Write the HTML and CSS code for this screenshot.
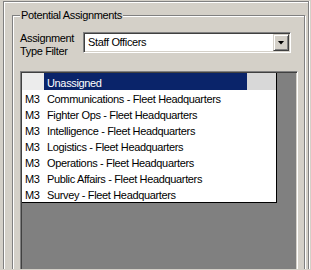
FILE: index.html
```html
<!DOCTYPE html>
<html lang="en">
<head>
  <meta charset="UTF-8">
  <title>Potential Assignments</title>
  <link rel="stylesheet" href="styles.css">
</head>
<body>
  <div class="frame">
    <fieldset class="group">
      <legend>Potential Assignments</legend>
      <div class="filter-row">
        <div class="filter-label">Assignment<br>Type Filter</div>
        <div class="combo">
          <span class="combo-text">Staff Officers</span>
          <span class="combo-btn"><span class="arrow"></span></span>
        </div>
      </div>
      <div class="workspace">
        <div class="grid">
          <div class="row first selected">
            <span class="cell rank"></span>
            <span class="cell name">Unassigned</span>
            <span class="cell fill"></span>
          </div>
          <div class="row"><span class="cell rank">M3</span><span class="cell name">Communications - Fleet Headquarters</span><span class="cell fill"></span></div>
          <div class="row"><span class="cell rank">M3</span><span class="cell name">Fighter Ops - Fleet Headquarters</span><span class="cell fill"></span></div>
          <div class="row"><span class="cell rank">M3</span><span class="cell name">Intelligence - Fleet Headquarters</span><span class="cell fill"></span></div>
          <div class="row"><span class="cell rank">M3</span><span class="cell name">Logistics - Fleet Headquarters</span><span class="cell fill"></span></div>
          <div class="row"><span class="cell rank">M3</span><span class="cell name">Operations - Fleet Headquarters</span><span class="cell fill"></span></div>
          <div class="row"><span class="cell rank">M3</span><span class="cell name">Public Affairs - Fleet Headquarters</span><span class="cell fill"></span></div>
          <div class="row"><span class="cell rank">M3</span><span class="cell name">Survey - Fleet Headquarters</span><span class="cell fill"></span></div>
        </div>
      </div>
    </fieldset>
  </div>
</body>
</html>
```

FILE: styles.css
```css
body {
  margin: 0;
  background: #d4d0c8;
  font-family: 'Liberation Sans', Arial, sans-serif;
  font-size: 11px;
  letter-spacing: -0.35px;
  color: #000;
  height: 270px;
  overflow: hidden;
}
.frame {
  margin: 1px 0 0 3px;
  width: 306px;
  height: 268px;
  box-sizing: border-box;
  border: 1px solid #808080;
  border-bottom: none;
  box-shadow: inset 1px 1px 0 #fff, 1px 0 0 #fff;
  padding: 7px 0 0 8px;
  overflow: hidden;
}
.group {
  margin: 0;
  padding: 0 0 0 7px;
  min-width: 0;
  width: 293px;
  height: 300px;
  box-sizing: border-box;
  border: 1px solid #808080;
  box-shadow: inset 1px 1px 0 #fff, 1px 1px 0 #fff;
}
.group legend {
  padding: 0 1px;
  line-height: 13px;
  background: #d4d0c8;
}
.filter-row {
  display: flex;
  margin-top: 10px;
}
.filter-label {
  width: 63px;
  line-height: 13px;
}
.combo {
  display: flex;
  align-items: center;
  width: 208px;
  height: 21px;
  box-sizing: border-box;
  padding: 1px;
  background: #fff;
  border: 1px solid;
  border-color: #808080 #fff #fff #808080;
  box-shadow: inset 1px 1px 0 #404040, inset -1px -1px 0 #d4d0c8;
}
.combo-text {
  flex: 1;
  padding-left: 3px;
  line-height: 13px;
}
.combo-btn {
  display: flex;
  align-items: center;
  justify-content: center;
  width: 16px;
  height: 17px;
  box-sizing: border-box;
  background: #d4d0c8;
  border: 1px solid;
  border-color: #d4d0c8 #404040 #404040 #d4d0c8;
  box-shadow: inset 1px 1px 0 #fff, inset -1px -1px 0 #808080;
}
.arrow {
  width: 7px;
  height: 4px;
  background: #000;
  clip-path: polygon(0 0, 100% 0, 50% 100%);
}
.workspace {
  margin-top: 13px;
  width: 278px;
  height: 220px;
  box-sizing: border-box;
  padding: 1px;
  background: #808080;
  border: 1px solid;
  border-color: #808080 #fff #fff #808080;
  box-shadow: inset 1px 1px 0 #404040, inset -1px -1px 0 #d4d0c8;
}
.grid {
  width: 255px;
  background: #fff;
  border-right: 1px solid #000;
  border-bottom: 1px solid #000;
  box-sizing: border-box;
}
.row {
  display: flex;
  height: 16px;
}
.row.first {
  height: 17px;
}
.cell {
  box-sizing: border-box;
  padding-top: 3px;
  line-height: 13px;
  white-space: nowrap;
  overflow: hidden;
}
.row.first .cell {
  padding-top: 4px;
}
.rank {
  width: 22px;
  padding-left: 3px;
}
.name {
  width: 203px;
  padding-left: 3px;
}
.fill {
  flex: 1;
}
.selected .rank {
  background: #ececec;
}
.selected .name {
  background: #0a246a;
  color: #fff;
}
.selected .fill {
  background: #d8d8d8;
}
```
